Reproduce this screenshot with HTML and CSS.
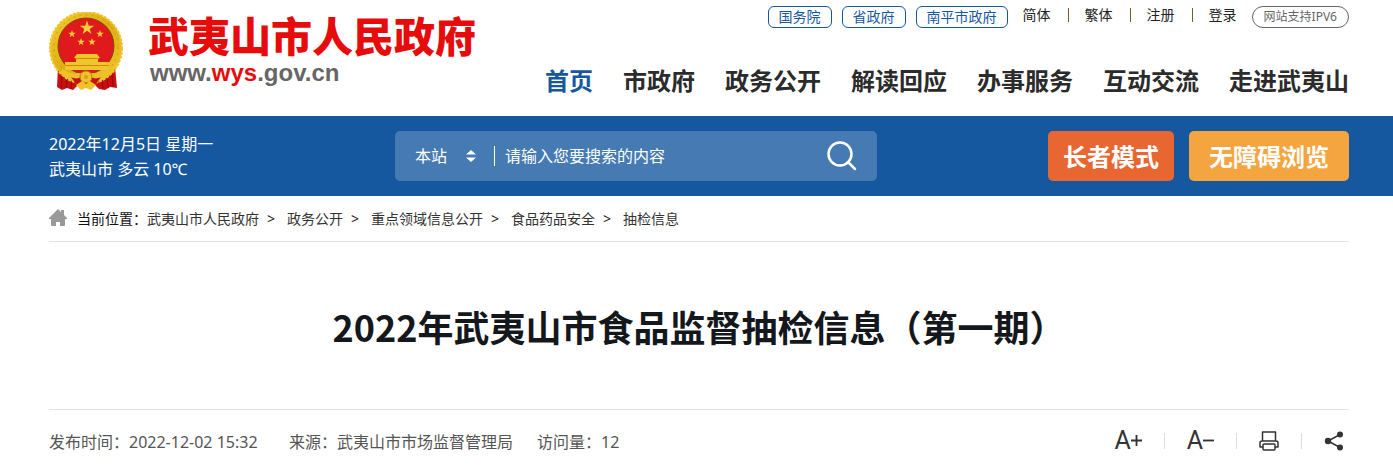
FILE: index.html
```
<!DOCTYPE html>
<html lang="zh-CN">
<head>
    <meta charset="UTF-8">
    <meta name="viewport" content="width=device-width, initial-scale=1.0">
    <title>2022年武夷山市食品监督抽检信息（第一期）</title>
    <link rel="stylesheet" href="styles.css">
</head>
<body>
    <header class="header wrap">
        <a class="logo" href="#">
            <svg class="emblem" viewBox="0 0 75 79" aria-hidden="true">
                <defs>
                    <linearGradient id="gold" x1="0" y1="0" x2="1" y2="1">
                        <stop offset="0" stop-color="#f3cf2e"/>
                        <stop offset="0.5" stop-color="#e0ac12"/>
                        <stop offset="1" stop-color="#f2cb35"/>
                    </linearGradient>
                    <path id="star" d="M0-1 .23-.31.95-.31.36.12.59.81 0 .38-.59.81-.36.12-.95-.31-.23-.31z"/>
                </defs>
                <!-- ribbon tails -->
                <path fill="#c90f14" d="M9 55 22 66 54 66 66 55 68 76 61 75 56 78 50 77 44 71 31 71 24 78 18 76 13 78 8 75z"/>
                <path fill="none" stroke="#8e0b0d" d="M13 62 12 76M18 66 17 76M58 66 59 76M63 62 64 75M23 68 22 77M53 68 54 77"/>
                <!-- wheat ring -->
                <circle cx="37" cy="36" r="36" fill="url(#gold)"/>
                <circle cx="37" cy="36" r="36" fill="none" stroke="#ecc62c" stroke-width="2" stroke-dasharray="3 1"/>
                <circle cx="37" cy="35" r="32" fill="none" stroke="#cf9a14" stroke-dasharray="2 4"/>
                <circle cx="37" cy="34" r="28" fill="#e0191c" stroke="#7a4b08"/>
                <g fill="#f6cf35">
                    <use href="#star" transform="translate(38 16) scale(7.500)"/>
                    <use href="#star" transform="translate(23 22) scale(4)"/>
                    <use href="#star" transform="translate(51 22) scale(4)"/>
                    <use href="#star" transform="translate(32 30) scale(4)"/>
                    <use href="#star" transform="translate(43 30) scale(4)"/>
                </g>
                <!-- gate tower -->
                <path fill="#f2c52c" d="M28 42h20l3 4H25zM27 46h22v4H27zM16 50h44v8H16z"/>
                <path fill="none" stroke="#c98a10" d="M26 46.500h24M16 53.500h44"/>
                <path fill="#eec02a" d="M14 57c8 6 15 6 23 2 8 4 15 4 23-2l3 4c-8 8-17 9-26 6-9 3-18 2-26-6z"/>
                <path fill="#c90f14" d="M22 65c6 3 10 1 15-4 5 5 9 7 15 4l-5 7H27z"/>
                <circle cx="37" cy="65" r="6" fill="#efc22b" stroke="#b97d0c"/>
                <circle cx="37" cy="65" r="2" fill="#d99f16"/>
                <path fill="#efc22b" d="M27 73l6-4 4 3 4-3 6 4-5 5-5-2-5 2z"/>
            </svg>
            <span class="logo-text">
                <strong class="logo-name">武夷山市人民政府</strong>
                <span class="logo-url">www.<b>wys</b>.gov.cn</span>
            </span>
        </a>
        <div class="header-right">
            <div class="top-links">
                <a class="pill" href="#">国务院</a>
                <a class="pill" href="#">省政府</a>
                <a class="pill" href="#">南平市政府</a>
                <div class="user-links">
                    <a href="#">简体</a>
                    <a href="#">繁体</a>
                    <a href="#">注册</a>
                    <a href="#">登录</a>
                </div>
                <a class="pill pill-ipv6" href="#">网站支持IPV6</a>
            </div>
            <nav class="main-nav">
                <a class="active" href="#">首页</a>
                <a href="#">市政府</a>
                <a href="#">政务公开</a>
                <a href="#">解读回应</a>
                <a href="#">办事服务</a>
                <a href="#">互动交流</a>
                <a href="#">走进武夷山</a>
            </nav>
        </div>
    </header>

    <div class="bar">
        <div class="bar-inner wrap">
            <div class="weather">
                <div>2022年12月5日 星期一</div>
                <div>武夷山市 多云 10℃</div>
            </div>
            <form class="search">
                <select class="search-scope" aria-label="搜索范围">
                    <option>本站</option>
                </select>
                <svg class="search-arrows" viewBox="0 0 10 12" aria-hidden="true">
                    <path fill="#fff" d="M5 0l5 4.500H0zM5 12L0 7.500h10z"/>
                </svg>
                <input class="search-input" type="text" aria-label="搜索" placeholder="请输入您要搜索的内容">
                <button class="search-btn" type="submit" aria-label="搜索">
                    <svg viewBox="0 0 30 30" fill="none" stroke="#fff" stroke-width="2.500" stroke-linecap="round">
                        <circle cx="13" cy="13" r="11.500"/>
                        <path d="M21 21l7 7"/>
                    </svg>
                </button>
            </form>
            <div class="modes">
                <button class="mode mode-elder" type="button">长者模式</button>
                <button class="mode mode-access" type="button">无障碍浏览</button>
            </div>
        </div>
    </div>

    <main class="wrap">
        <nav class="crumbs">
            <svg class="home" viewBox="0 0 18 17" aria-hidden="true">
                <path fill="#999" d="M9 0l3 3V1h3v5l3 3v1h-2v6q0 1-1 1h-4v-4H7v4H3q-1 0-1-1v-6H0V9z"/>
            </svg>
            <span class="crumbs-label">当前位置：</span>
            <a href="#">武夷山市人民政府</a>
            <a href="#">政务公开</a>
            <a href="#">重点领域信息公开</a>
            <a href="#">食品药品安全</a>
            <a href="#">抽检信息</a>
        </nav>

        <h1 class="title">2022年武夷山市食品监督抽检信息（第一期）</h1>

        <div class="meta">
            <div class="meta-info">
                <span class="meta-date">发布时间：2022-12-02 15:32</span>
                <span>来源：武夷山市市场监督管理局</span>
                <span>访问量：12</span>
            </div>
            <div class="tools">
                <button class="tool tool-font" type="button" aria-label="放大字体">A<svg viewBox="0 0 12 12"><path d="M0 6h12M6 0v12"/></svg></button>
                <button class="tool tool-font" type="button" aria-label="缩小字体">A<svg viewBox="0 0 12 12"><path d="M0 6h12"/></svg></button>
                <button class="tool" type="button" aria-label="打印">
                    <svg class="tool-icon" viewBox="0 0 20 20" fill="none" stroke="#333" stroke-width="1.500" stroke-linejoin="round">
                        <path d="M3.500 10V1h13v9M4 16H1v-4q0-2 2-2h14q2 0 2 2v4h-3"/>
                        <path d="M5 13h10q1 0 1 1v4q0 1-1 1H5q-1 0-1-1v-4q0-1 1-1z"/>
                    </svg>
                </button>
                <button class="tool" type="button" aria-label="分享">
                    <svg class="tool-icon" viewBox="0 0 20 20">
                        <path fill="none" stroke="#333" stroke-width="1.500" d="M16 3.500L4 10l12 6.500"/>
                        <circle cx="16" cy="3.500" r="3" fill="#333"/>
                        <circle cx="4" cy="10" r="3.200" fill="#333"/>
                        <circle cx="16" cy="16.500" r="3" fill="#333"/>
                    </svg>
                </button>
            </div>
        </div>
    </main>
</body>
</html>
```
FILE: styles.css
```
* {
    box-sizing: border-box;
}
body {
    margin: 0;
    background: #fff;
    color: #333;
    font-family: "Noto Sans", "Noto Sans CJK SC", sans-serif;
    font-size: 14px;
}
a {
    color: inherit;
    text-decoration: none;
}
button, input, select {
    font-family: inherit;
    border: none;
    padding: 0;
    background: none;
    color: inherit;
}
button {
    cursor: pointer;
}
svg {
    display: block;
    flex-shrink: 0;
}
.wrap {
    padding: 0 44px 0 49px;
}

/* header */
.header {
    display: flex;
    justify-content: space-between;
    height: 116px;
}
.logo {
    display: flex;
    gap: 24px;
    padding-top: 12px;
}
.emblem {
    width: 75px;
    height: 79px;
}
.logo-text {
    display: flex;
    flex-direction: column;
    padding-top: 3px;
    font-family: "Liberation Sans", "Noto Sans CJK SC", sans-serif;
}
.logo-name {
    font-size: 41px;
    font-weight: 900;
    line-height: 46px;
    color: #e60c0c;
    white-space: nowrap;
}
.logo-url {
    padding-left: 2px;
    font-size: 24px;
    font-weight: bold;
    line-height: 24px;
    color: #666;
}
.logo-url b {
    color: #e60c0c;
}
.header-right {
    display: flex;
    flex-direction: column;
    align-items: flex-end;
}
.top-links {
    display: flex;
    gap: 10px;
    padding-top: 6px;
    white-space: nowrap;
}
.pill {
    height: 22px;
    padding: 0 10px;
    border: 1px solid #1658a0;
    border-radius: 6px;
    line-height: 20px;
    color: #1658a0;
}
.user-links {
    display: flex;
    padding: 0 5px;
    line-height: 18px;
    color: #222;
}
.user-links a + a {
    display: flex;
    align-items: center;
    height: 18px;
}
.user-links a + a::before {
    content: "";
    width: 1px;
    height: 14px;
    margin: 0 16px 0 17px;
    background: #7a5a30;
}
.pill-ipv6 {
    padding: 0 11px;
    border-color: #666;
    border-radius: 11px;
    font-size: 12px;
    color: #666;
}
.main-nav {
    display: flex;
    gap: 30px;
    padding-top: 35px;
    font-size: 24px;
    font-weight: bold;
    line-height: 36px;
    color: #2b2b2b;
    white-space: nowrap;
}
.main-nav .active {
    color: #1658a0;
}

/* blue bar */
.bar {
    background: #1658a0;
    color: #fff;
}
.bar-inner {
    display: flex;
    align-items: center;
    height: 80px;
}
.weather {
    flex: 0 0 346px;
    padding-top: 2px;
    font-size: 16px;
    line-height: 25px;
}
.search {
    display: flex;
    flex: 0 1 482px;
    align-items: center;
    height: 50px;
    padding: 0 20px;
    border-radius: 5px;
    background: #457ab3;
}
.search-scope {
    width: 51px;
    appearance: none;
    font-size: 16px;
}
.search-arrows {
    width: 10px;
    height: 12px;
}
.search-input {
    flex: 1;
    min-width: 0;
    height: 20px;
    margin-left: 18px;
    padding-left: 10px;
    border-left: 1px solid #fff;
    font-size: 16px;
}
.search-input::placeholder {
    color: #fff;
    opacity: 1;
}
.search-btn svg {
    width: 30px;
    height: 30px;
}
.modes {
    display: flex;
    gap: 15px;
    margin-left: auto;
}
.mode {
    height: 50px;
    padding-bottom: 2px;
    border-radius: 5px;
    font-size: 24px;
    font-weight: bold;
    white-space: nowrap;
}
.mode-elder {
    padding-left: 15px;
    padding-right: 15px;
    background: #e86632;
}
.mode-access {
    padding-left: 20px;
    padding-right: 20px;
    background: #f4a540;
}

/* breadcrumb */
.crumbs {
    display: flex;
    align-items: center;
    height: 46px;
    padding-bottom: 2px;
    border-bottom: 1px solid #e2e2e2;
    white-space: nowrap;
}
.home {
    width: 18px;
    height: 17px;
    margin-right: 10px;
}
.crumbs-label {
    color: #111;
}
.crumbs a + a::before {
    content: ">";
    margin: 0 12px 0 8px;
    color: #222;
}

/* article */
.title {
    display: flex;
    align-items: center;
    justify-content: center;
    height: 167px;
    margin: 0;
    font-family: "Noto Sans CJK SC", sans-serif;
    font-size: 36px;
    line-height: 48px;
    color: #14181d;
}
.meta {
    display: flex;
    align-items: center;
    justify-content: space-between;
    height: 62px;
    border-top: 1px solid #e2e2e2;
}
.meta-info {
    display: flex;
    gap: 24px;
    font-size: 16px;
    color: #555;
    white-space: nowrap;
}
.meta-date {
    min-width: 216px;
}
.tools {
    display: flex;
    align-items: center;
    padding-right: 5px;
}
.tool {
    display: flex;
    align-items: center;
    color: #333;
}
.tool + .tool::before {
    content: "";
    width: 1px;
    height: 16px;
    margin: 0 22px;
    background: #ddd;
}
.tool-font {
    font-family: Roboto, sans-serif;
    font-size: 25px;
    line-height: 28px;
}
.tool-font svg {
    width: 11px;
    height: 11px;
    fill: none;
    stroke: #333;
    stroke-width: 2;
}
.tool-icon {
    width: 20px;
    height: 20px;
}
```
